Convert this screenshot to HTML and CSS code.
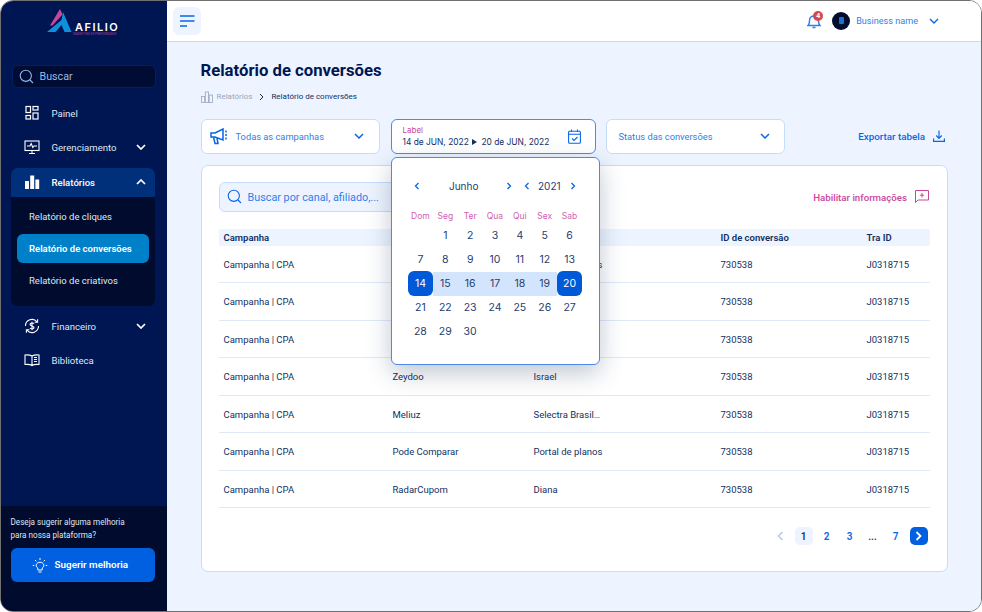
FILE: index.html
```html
<!DOCTYPE html>
<html lang="pt-BR">
<head>
<meta charset="utf-8">
<title>Relatório de conversões</title>
<link rel="stylesheet" href="styles.css">
</head>
<body>
<div class="window">
  <aside class="sidebar">
    <div class="logo">
      <svg class="logo-mark" width="25" height="25" viewBox="0 0 25 25"><path d="M13 1 L15.500 6.500 L5.500 17.500 L3 17.500Z" fill="#c9479b"/><path d="M16 4 L24.500 24 L17.500 24 L14.500 17 L8.500 24 L0 24 L14.500 12Z" fill="#0f8fdc"/></svg>
      <div class="logo-text"><span class="logo-name">AFILIO</span><span class="logo-sub">MARKETING DE PERFORMANCE</span></div>
    </div>
    <div class="side-search">
      <svg width="15" height="15" viewBox="0 0 15 15" fill="none" stroke="#8fb4e8" stroke-width="1.1"><circle cx="6.8" cy="6.8" r="5.6"/><path d="M11 11l3 3"/></svg>
      <span>Buscar</span>
    </div>
    <nav class="nav">
      <a class="nav-item">
        <svg class="nav-icon" viewBox="0 0 16 16" fill="none" stroke="#fff" stroke-width="1.2"><rect x="2" y="1.5" width="4.5" height="6"/><rect x="9" y="1.5" width="5" height="3.5"/><rect x="2" y="10.5" width="4.5" height="3.5"/><rect x="9" y="8" width="5" height="6"/></svg>
        <span>Painel</span>
      </a>
      <a class="nav-item">
        <svg class="nav-icon" viewBox="0 0 16 16" fill="none" stroke="#fff" stroke-width="1.1"><rect x="1" y="2" width="14" height="9.5"/><path d="M3 7h3l1.2-2.5 1.6 4L10 7h3M5 14.5h6M8 11.5v3"/></svg>
        <span>Gerenciamento</span>
        <svg class="chev" viewBox="0 0 10 6" fill="none" stroke="#fff" stroke-width="1.7"><path d="M1 1l4 4 4-4"/></svg>
      </a>
      <a class="nav-item nav-open">
        <svg class="nav-icon" viewBox="0 0 16 16" fill="#fff"><rect x="1" y="7" width="4" height="8"/><rect x="6.2" y="1.5" width="4" height="13.5"/><rect x="11.4" y="5.5" width="3.8" height="9.5"/></svg>
        <span>Relatórios</span>
        <svg class="chev" viewBox="0 0 10 6" fill="none" stroke="#fff" stroke-width="1.7"><path d="M1 5l4-4 4 4"/></svg>
      </a>
      <div class="submenu">
        <a class="sub-item">Relatório de cliques</a>
        <a class="sub-item sub-active">Relatório de conversões</a>
        <a class="sub-item">Relatório de criativos</a>
      </div>
      <a class="nav-item nav-after">
        <svg class="nav-icon" viewBox="0 0 16 16" fill="none" stroke="#fff" stroke-width="1.1"><path d="M1.5 8A6.5 6.5 0 0 1 13 3.8M14.5 8A6.5 6.5 0 0 1 3 12.2"/><path d="M13.6 1.2v3h-3M2.4 14.8v-3h3"/><path d="M10 5.6C9.5 4.8 6.2 4.4 6 6.3 5.9 8.2 10.2 7.700 10 9.800 9.800 11.400 6.500 11 6 10M8 3.800v8.400"/></svg>
        <span>Financeiro</span>
        <svg class="chev" viewBox="0 0 10 6" fill="none" stroke="#fff" stroke-width="1.7"><path d="M1 1l4 4 4-4"/></svg>
      </a>
      <a class="nav-item">
        <svg class="nav-icon" viewBox="0 0 16 16" fill="none" stroke="#fff" stroke-width="1.1"><path d="M8 4C6 2.800 3 2.800 1 3v9.500c2-.2 5-.2 7 1 2-1.200 5-1.200 7-1V3c-2-.2-5-.2-7 1zM8 4v9.500M10 5.500h3M10 7.500h3M10 9.500h3"/></svg>
        <span>Biblioteca</span>
      </a>
    </nav>
    <div class="side-footer">
      <p>Deseja sugerir alguma melhoria<br>para nossa plataforma?</p>
      <button class="suggest">
        <svg width="16" height="16" viewBox="0 0 16 16" fill="none" stroke="#fff" stroke-width="1"><path d="M5.800 11.200C4.500 10.300 4 9 4.300 7.700 4.700 6.200 6.200 5.300 8 5.300s3.300.9 3.700 2.400c.3 1.300-.2 2.600-1.500 3.500v1.800H5.800zM6.500 15h3M8 1v2M3 3l1.300 1.300M13 3l-1.300 1.300M.8 8.500h1.500M13.700 8.500h1.500"/></svg>
        <span>Sugerir melhoria</span>
      </button>
    </div>
  </aside>

  <div class="content">
    <header class="topbar">
      <button class="menu-btn">
        <svg width="16" height="12" viewBox="0 0 16 12" fill="none" stroke="#0a66e4" stroke-width="1.400"><path d="M1 1h14.500M1 6h14.500M1 11h7"/></svg>
      </button>
      <div class="top-right">
        <div class="bell">
          <svg width="14" height="16" viewBox="0 0 14 16" fill="none" stroke="#2f80ed" stroke-width="1.400"><path d="M1 12.500c1.400-1 1.500-2.500 1.500-5C2.500 4.500 4.500 3 7 3s4.500 1.500 4.500 4.500c0 2.500.1 4 1.500 5zM5.500 14.500h3"/></svg>
          <span class="badge">4</span>
        </div>
        <div class="avatar"><span class="avatar-bar"></span></div>
        <span class="biz">Business name</span>
        <svg class="biz-chev" viewBox="0 0 10 6" fill="none" stroke="#0a66e4" stroke-width="1.400"><path d="M1 1l4 4 4-4"/></svg>
      </div>
    </header>

    <main class="main">
      <h1>Relatório de conversões</h1>
      <div class="crumbs">
        <svg width="12" height="12" viewBox="0 0 12 12" fill="none" stroke="#98a6bd" stroke-width=".8"><rect x=".5" y="5.500" width="3.200" height="6"/><rect x="4.300" y="1" width="3.300" height="10.500"/><rect x="8.200" y="4" width="3.300" height="7.500"/></svg>
        <span class="crumb-muted">Relatórios</span>
        <svg class="crumb-sep" viewBox="0 0 5 8" fill="none" stroke="#12305f" stroke-width="1"><path d="M1 1l3 3-3 3"/></svg>
        <span class="crumb-now">Relatório de conversões</span>
      </div>

      <div class="filters">
        <div class="select select-camp">
          <svg width="20" height="17" viewBox="0 0 20 17" fill="none" stroke="#0a66e4" stroke-width="1.500"><path d="M1 5h4L13 1v11L5 9H1zM3.500 9l1.500 6.500h3L7 10M16 2.500v2M16 6v2M16 9.500v2" /></svg>
          <span>Todas as campanhas</span>
          <svg class="sel-chev" viewBox="0 0 10 6" fill="none" stroke="#0a66e4" stroke-width="1.500"><path d="M1 1l4 4 4-4"/></svg>
        </div>
        <div class="select select-date">
          <div class="date-text">
            <span class="date-label">Label</span>
            <span class="date-val">14 de JUN, 2022 <i class="tri"></i> 20 de JUN, 2022</span>
          </div>
          <svg width="13" height="15" viewBox="0 0 13 15" fill="none" stroke="#0a66e4" stroke-width="1.100"><rect x=".6" y="2.200" width="11.800" height="12"  rx="1"/><path d="M.6 5.200h11.800M3.500.5v2.500M9.500.5v2.500M4 9.500l2 2 3.500-3.500"/></svg>
        </div>
        <div class="select select-status">
          <span>Status das conversões</span>
          <svg class="sel-chev" viewBox="0 0 10 6" fill="none" stroke="#0a66e4" stroke-width="1.500"><path d="M1 1l4 4 4-4"/></svg>
        </div>
        <a class="export">
          <span>Exportar tabela</span>
          <svg width="12" height="12" viewBox="0 0 12 12" fill="none" stroke="#0a66e4" stroke-width="1.200"><path d="M6 .5v7.500M3.200 5.500 6 8.300l2.800-2.800M.6 8.500v2.800h10.800V8.500"/></svg>
        </a>
      </div>

      <section class="card">
        <div class="card-head">
          <div class="card-search">
            <svg width="15" height="15" viewBox="0 0 15 15" fill="none" stroke="#0a66e4" stroke-width="1.100"><circle cx="6.800" cy="6.800" r="5.600"/><path d="M11 11l3 3"/></svg>
            <span>Buscar por canal, afiliado,...</span>
          </div>
          <a class="enable">
            <span>Habilitar informações</span>
            <svg width="14" height="13" viewBox="0 0 14 13" fill="none" stroke="#c9479b" stroke-width="1"><path d="M.5 .5h13v9.500H3L.5 12.500zM7 3v4.500M4.800 5.200h4.400"/></svg>
          </a>
        </div>
        <div class="table">
          <div class="row row-head"><span>Campanha</span><span>Canal</span><span>Afiliado</span><span>ID de conversão</span><span>Tra ID</span></div>
          <div class="row"><span>Campanha | CPA</span><span>Zeydoo</span><span>Portal de planos</span><span>730538</span><span>J0318715</span></div>
          <div class="row"><span>Campanha | CPA</span><span>Meliuz</span><span>Israel</span><span>730538</span><span>J0318715</span></div>
          <div class="row"><span>Campanha | CPA</span><span>Pode Comparar</span><span>Diana</span><span>730538</span><span>J0318715</span></div>
          <div class="row"><span>Campanha | CPA</span><span>Zeydoo</span><span>Israel</span><span>730538</span><span>J0318715</span></div>
          <div class="row"><span>Campanha | CPA</span><span>Meliuz</span><span>Selectra Brasil…</span><span>730538</span><span>J0318715</span></div>
          <div class="row"><span>Campanha | CPA</span><span>Pode Comparar</span><span>Portal de planos</span><span>730538</span><span>J0318715</span></div>
          <div class="row"><span>Campanha | CPA</span><span>RadarCupom</span><span>Diana</span><span>730538</span><span>J0318715</span></div>
        </div>
        <div class="pager">
          <span class="pg pg-prev"><svg width="7" height="10" viewBox="0 0 7 10" fill="none" stroke="#b8c8df" stroke-width="1.500"><path d="M5.500 1l-4 4 4 4"/></svg></span>
          <span class="pg pg-cur">1</span>
          <span class="pg">2</span>
          <span class="pg">3</span>
          <span class="pg pg-dots">...</span>
          <span class="pg">7</span>
          <span class="pg pg-next"><svg width="7" height="10" viewBox="0 0 7 10" fill="none" stroke="#fff" stroke-width="1.800"><path d="M1.500 1l4 4-4 4"/></svg></span>
        </div>
      </section>
    </main>

    <div class="calendar">
      <div class="cal-head">
        <svg class="cal-arrow cal-a1" viewBox="0 0 6 8" fill="none" stroke="#0a66e4" stroke-width="1.300"><path d="M4.500 1l-3 3 3 3"/></svg>
        <span class="cal-month">Junho</span>
        <svg class="cal-arrow cal-a2" viewBox="0 0 6 8" fill="none" stroke="#0a66e4" stroke-width="1.300"><path d="M1.500 1l3 3-3 3"/></svg>
        <svg class="cal-arrow cal-a3" viewBox="0 0 6 8" fill="none" stroke="#0a66e4" stroke-width="1.300"><path d="M4.500 1l-3 3 3 3"/></svg>
        <span class="cal-year">2021</span>
        <svg class="cal-arrow cal-a4" viewBox="0 0 6 8" fill="none" stroke="#0a66e4" stroke-width="1.300"><path d="M1.500 1l3 3-3 3"/></svg>
      </div>
      <div class="cal-grid">
        <span class="dow">Dom</span><span class="dow">Seg</span><span class="dow">Ter</span><span class="dow">Qua</span><span class="dow">Qui</span><span class="dow">Sex</span><span class="dow">Sab</span>
        <span></span><span class="day">1</span><span class="day">2</span><span class="day">3</span><span class="day">4</span><span class="day">5</span><span class="day">6</span>
        <span class="day">7</span><span class="day">8</span><span class="day">9</span><span class="day">10</span><span class="day">11</span><span class="day">12</span><span class="day">13</span>
        <span class="day day-end">14</span><span class="day day-range">15</span><span class="day day-range">16</span><span class="day day-range">17</span><span class="day day-range">18</span><span class="day day-range">19</span><span class="day day-end">20</span>
        <span class="day">21</span><span class="day">22</span><span class="day">23</span><span class="day">24</span><span class="day">25</span><span class="day">26</span><span class="day">27</span>
        <span class="day">28</span><span class="day">29</span><span class="day">30</span>
      </div>
    </div>
  </div>
</div>
</body>
</html>
```
FILE: styles.css
```css
* { box-sizing: border-box; margin: 0; padding: 0; }
html, body { width: 982px; height: 612px; overflow: hidden; background: #fff; }
body { font-family: Roboto, "Liberation Sans", sans-serif; font-size: 9.500px; color: #12305f; }
a { display: block; }
.window { width: 982px; height: 612px; display: flex; border: 1.5px solid #707070; border-radius: 13px; overflow: hidden; }

/* sidebar */
.sidebar { width: 165.5px; flex: none; background: #001653; display: flex; flex-direction: column; color: #dfe7f3; }
.logo { height: 40px; display: flex; align-items: flex-start; padding: 6.5px 0 0 45.5px; }
.logo-mark { flex: none; }
.logo-text { display: flex; flex-direction: column; margin: 13px 0 0 3.500px; }
.logo-name { font-family: Inter, sans-serif; font-weight: 600; font-size: 11px; line-height: 12px; letter-spacing: 1.500px; color: #fff; }
.logo-sub { font-size: 3px; line-height: 3px; color: #a93a8e; white-space: nowrap; margin-left: -2px; }
.side-search { margin: 23.5px 10.500px 0; height: 23px; background: #000c33; border-radius: 6px; border: 1px solid #03205e; display: flex; align-items: center; gap: 6px; padding-left: 6px; font-size: 10.700px; color: #9db9e2; }
.nav { margin: 8.500px 11.500px 0 9.500px; display: flex; flex-direction: column; }
.nav-item { height: 34.300px; display: flex; align-items: center; padding: 0 9px 0 13px; color: #dfe7f3; position: relative; font-size: 9.600px; }
.nav-item span { margin-left: 12px; flex: 1; }
.nav-icon { width: 16px; height: 16px; flex: none; }
.chev { width: 10px; height: 6px; flex: none; }
.nav-open { height: 29px; margin-top: 3px; background: #01307a; border-radius: 7px 7px 0 0; color: #fff; font-weight: 500; }
.submenu { background: #000b2e; border-radius: 0 0 6px 6px; height: 109px; padding: 5px 6px 0; }
.sub-item { height: 31.500px; line-height: 29px; padding-left: 12.500px; color: #dfe7f3; white-space: nowrap; }
.sub-active { height: 29px; background: #0080c8; border-radius: 6px; color: #fff; font-weight: 600; margin: 1px 0 2.500px; }
.nav-after { margin-top: 3.500px; margin-bottom: -.5px; }
.side-footer { margin-top: auto; height: 105.500px; background: #000b2e; padding: 10.500px 10.500px 0 9.500px; color: #dfe7f3; }
.side-footer p { font-size: 8.150px; line-height: 13px; }
.suggest { margin-top: 5.500px; width: 144px; height: 34.500px; border: 0; border-radius: 6px; background: #0060e0; color: #fff; font: 600 9.900px Roboto, sans-serif; display: flex; align-items: center; padding-left: 21px; gap: 7px; }

/* content */
.content { flex: 1; min-width: 0; background: #edf4ff; position: relative; display: flex; flex-direction: column; }
.topbar { height: 40.500px; flex: none; background: #fff; border-bottom: 1px solid #c5d9f5; display: flex; align-items: center; justify-content: space-between; padding: 0 42px 0 6px; }
.menu-btn { width: 28px; height: 28px; border: 0; border-radius: 6px; background: #edf4ff; display: flex; align-items: center; justify-content: center; }
.top-right { display: flex; align-items: center; }
.bell { position: relative; width: 14px; height: 16px; margin-right: 11px; }
.badge { position: absolute; left: 6px; top: -2px; width: 10px; height: 10px; border-radius: 50%; background: #d9464f; color: #fff; font-size: 7px; font-weight: 700; line-height: 10px; text-align: center; }
.avatar { width: 18px; height: 18px; border-radius: 50%; background: #020c2c; margin-right: 6px; display: flex; align-items: center; justify-content: center; }
.avatar-bar { width: 5px; height: 7px; background: #1b6fd0; border-radius: 1px; }
.biz { color: #2f80ed; font-size: 9.100px; }
.biz-chev { width: 10px; height: 6px; margin-left: 11px; }

.main { flex: 1; padding: 19px 33px 0 34px; display: flex; flex-direction: column; min-height: 0; }
h1 { font-size: 16.700px; line-height: 20px; font-weight: 700; color: #001653; }
.crumbs { display: flex; align-items: center; height: 14px; margin-top: 9px; font-size: 8px; }
.crumb-muted { margin-left: 4px; color: #98a6bd; }
.crumb-sep { width: 5px; height: 8px; margin: 0 7px; }
.crumb-now { color: #12305f; }
.filters { display: flex; align-items: center; margin-top: 15px; height: 35px; }
.select { height: 35px; background: #fff; border: 1px solid #c5dcfb; border-radius: 6px; display: flex; align-items: center; color: #2d7fe8; font-size: 9.300px; }
.select-camp { width: 179px; padding: 0 15px 0 8px; gap: 6px; margin-right: 11px; }
.select-camp span, .select-status span { flex: 1; white-space: nowrap; }
.sel-chev { width: 10px; height: 6px; flex: none; }
.select-date { width: 205px; border-color: #4a8be8; padding: 0 14px 0 11px; justify-content: space-between; margin-right: 10px; }
.date-text { display: flex; flex-direction: column; font-family: Inter, sans-serif; }
.date-label { font-size: 8px; line-height: 11px; color: #c9479b; margin-top: 1px; }
.date-val { font-size: 8.400px; line-height: 13px; color: #12305f; white-space: nowrap; }
.tri { display: inline-block; width: 0; height: 0; border-left: 5px solid #12305f; border-top: 3px solid transparent; border-bottom: 3px solid transparent; margin: 0 2px 0 1px; }
.select-status { width: 179px; padding: 0 14px 0 12px; }
.export { margin-left: auto; display: flex; align-items: center; gap: 8px; color: #0a66e4; font-weight: 500; font-size: 9.800px; padding-right: 3px; white-space: nowrap; }

.card { margin-top: 11px; height: 407px; background: #fff; border: 1px solid #c5dcfb; border-radius: 7px; padding: 16px 17px 0; display: flex; flex-direction: column; }
.card-head { display: flex; align-items: center; justify-content: space-between; height: 30px; }
.card-search { width: 190px; height: 30px; background: #edf4ff; border: 1px solid #c5dcfb; border-radius: 6px; display: flex; align-items: center; gap: 6px; padding-left: 7px; color: #2d7fe8; font-size: 10.800px; white-space: nowrap; }
.card-search span, .enable span { padding-top: 1px; }
.enable { display: flex; align-items: center; gap: 8px; color: #c9479b; font-weight: 500; font-size: 9.700px; padding-right: 1px; }
.table { margin-top: 17px; }
.row { display: grid; grid-template-columns: 169px 141px 187px 146px 1fr; align-items: center; height: 37.500px; padding: 1px 0 0 5px; border-bottom: 1px solid #dfe9f7; white-space: nowrap; color: #12305f; }
.row-head { height: 17px; padding-top: 0; background: #edf4ff; border-bottom: 0; font-weight: 600; color: #12305f; border-radius: 2px; }
.pager { display: flex; align-items: center; justify-content: flex-end; gap: 5px; margin-top: 19px; padding-right: 2.500px; }
.pg { width: 18px; height: 18px; display: flex; align-items: center; justify-content: center; border-radius: 5px; color: #0a66e4; font-weight: 600; font-size: 10px; }
.pg-cur { background: #edf4ff; color: #12305f; }
.pg-dots { color: #12305f; }
.pg-next { background: #0060e0; }

/* calendar popover */
.calendar { position: absolute; left: 224.500px; top: 155.500px; width: 209px; height: 208px; background: #fff; border: 1px solid #4a8be8; border-radius: 6px; box-shadow: 0 8px 24px rgba(30, 50, 90, .28); padding: 0 16px; font-family: Inter, sans-serif; }
.cal-head { display: flex; align-items: center; height: 16px; margin-top: 20px; font-size: 10px; color: #26406e; }
.cal-arrow { width: 6px; height: 8px; flex: none; }
.cal-a1 { margin-left: 6px; }
.cal-month { margin-left: 29px; width: 57px; }
.cal-a2 { margin-left: 0; }
.cal-a3 { margin-left: 12px; }
.cal-year { margin-left: 8px; width: 29px; }
.cal-a4 { margin-left: 3px; }
.cal-grid { display: grid; grid-template-columns: repeat(7, 24.860px); grid-template-rows: 15px repeat(5, 24px); margin-top: 15px; }
.dow { color: #d062b0; font-size: 8.500px; line-height: 14px; text-align: center; }
.day { display: flex; align-items: center; justify-content: center; font-size: 10.500px; color: #26406e; }
.day-range { background: #d3e5fd; }
.day-end { background: #0059d6; color: #fff; border-radius: 6px; margin-top: -1px; }
```
